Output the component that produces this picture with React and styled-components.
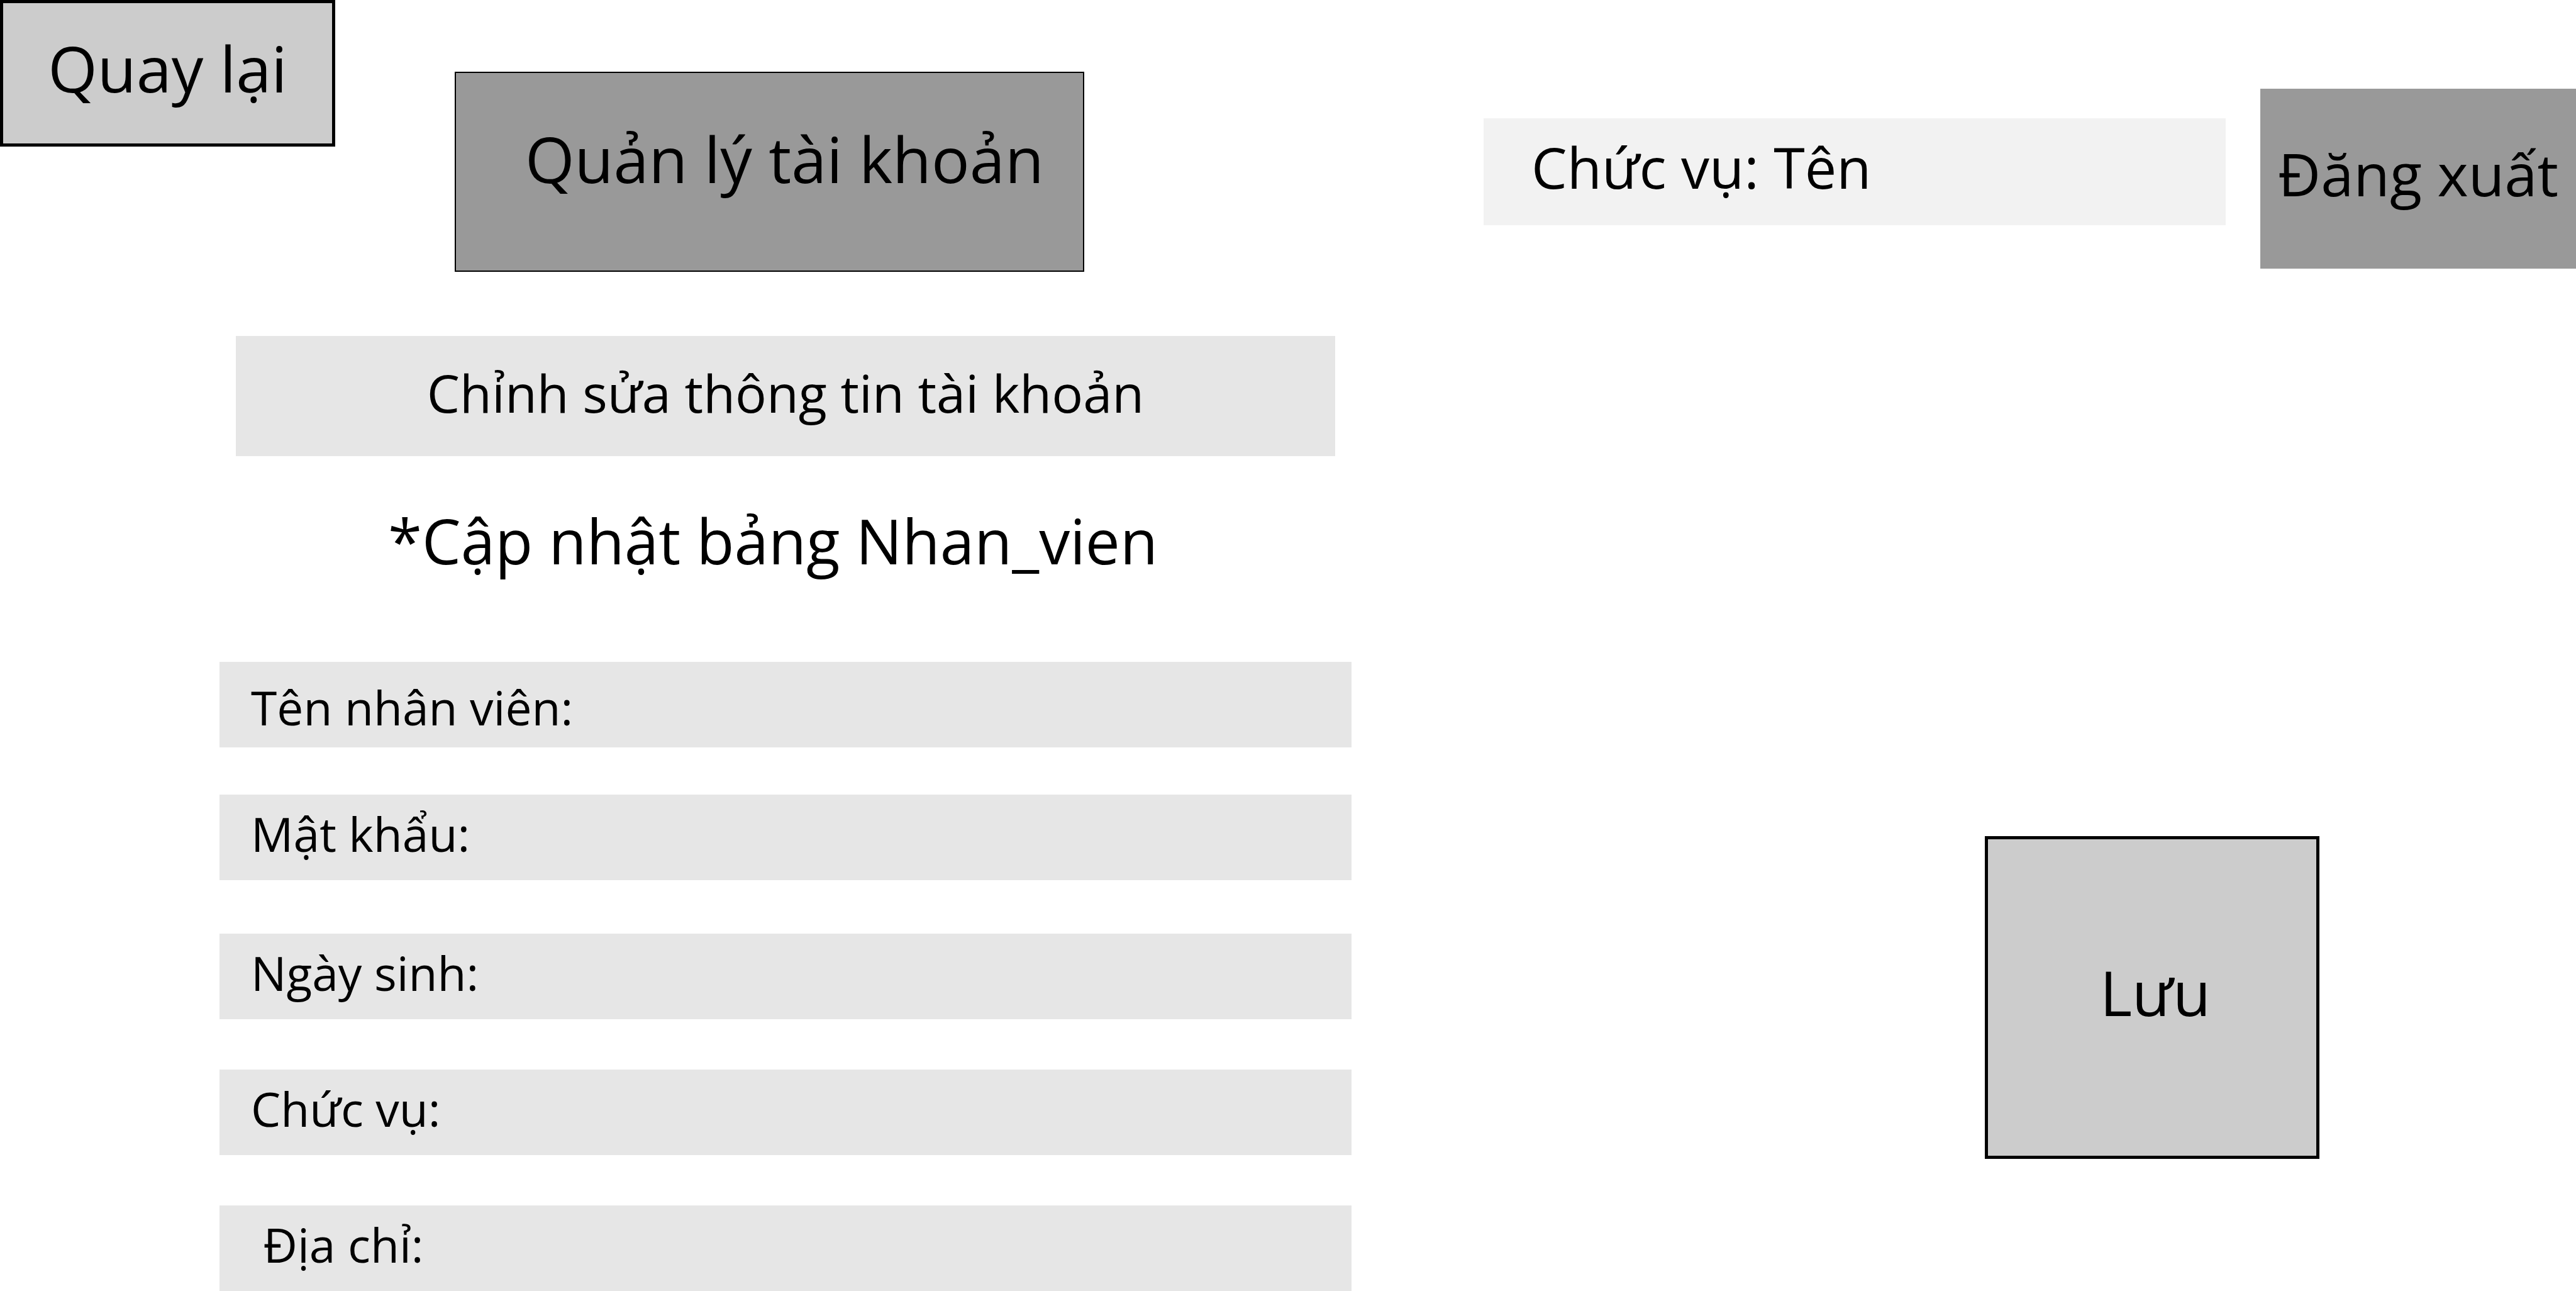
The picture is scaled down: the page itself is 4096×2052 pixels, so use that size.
import React from "react";
import styled, { createGlobalStyle } from "styled-components";

const GlobalStyle = createGlobalStyle`
  *, *::before, *::after {
    box-sizing: border-box;
  }

  body {
    margin: 0;
    background: #fff;
    color: #000;
    font-family: "Open Sans", "Noto Sans", sans-serif;
  }

  button, input {
    margin: 0;
    border: 0;
    border-radius: 0;
    color: inherit;
    font: inherit;
  }
`;

const Page = styled.div`
  display: flex;
  flex-direction: column;
  min-height: 100vh;
`;

const Header = styled.header`
  display: grid;
  grid-template-columns: 533fr 190fr 1001fr 635fr 1180fr 55fr 502fr;
  align-items: start;
  white-space: nowrap;
`;

const BackButton = styled.button`
  grid-column: 1;
  padding: 40px 0 56px;
  border: 5px solid #000;
  background: #ccc;
  font-size: 101px;
  line-height: 127px;
`;

const PageTitle = styled.h1`
  grid-column: 3;
  margin: 114px 0 0;
  padding: 72px 0 114px 110px;
  border: 2px solid #000;
  background: #999;
  font-size: 101px;
  font-weight: 400;
  line-height: 128px;
`;

const UserInfo = styled.div`
  grid-column: 5;
  margin-top: 188px;
  padding: 17px 0 33px 76px;
  background: #f2f2f2;
  font-size: 90px;
  line-height: 120px;
`;

const LogoutButton = styled.button`
  grid-column: 7;
  margin-top: 141px;
  padding: 75px 0 91px;
  background: #999;
  font-size: 94px;
  line-height: 120px;
`;

const Form = styled.form`
  display: grid;
  grid-template-columns: 349fr 1800fr 1007fr 532fr 408fr;
  align-items: start;
  padding-top: 102px;
`;

const Details = styled.section`
  grid-column: 2;
  display: flex;
  flex-direction: column;
`;

const SectionTitle = styled.h2`
  margin: 0 26px;
  padding: 30px 0 41px;
  background: #e6e6e6;
  font-size: 83px;
  font-weight: 400;
  line-height: 120px;
  text-align: center;
`;

const Note = styled.p`
  margin: 67px 0 126px;
  padding-right: 40px;
  font-size: 98px;
  line-height: 134px;
  text-align: center;
`;

const Field = styled.div`
  display: flex;
  margin-top: ${({ $gap }) => $gap}px;
  padding: ${({ $first }) => ($first ? "20px 50px 12px" : "10px 50px 22px")};
  background: #e6e6e6;
  font-size: 75px;
  line-height: 104px;
`;

const FieldLabel = styled.label`
  flex: none;
  white-space: pre;
`;

const FieldInput = styled.input`
  flex: 1;
  min-width: 0;
  height: 104px;
  padding: 0 20px;
  background: transparent;
  outline: none;
`;

const SaveButton = styled.button`
  grid-column: 4;
  margin-top: 795px;
  padding: 182px 0 198px 10px;
  border: 5px solid #000;
  background: #ccc;
  font-size: 98px;
  line-height: 123px;
`;

const fields = [
  { id: "name", label: "Tên nhân viên:", type: "text", gap: 0 },
  { id: "password", label: "Mật khẩu:", type: "password", gap: 75 },
  { id: "birthday", label: "Ngày sinh:", type: "text", gap: 85 },
  { id: "role", label: "Chức vụ:", type: "text", gap: 80 },
  { id: "address", label: " Địa chỉ:", type: "text", gap: 80 },
];

export default function App() {
  return (
    <>
      <GlobalStyle />
      <Page>
        <Header>
          <BackButton type="button">Quay lại</BackButton>
          <PageTitle>Quản lý tài khoản</PageTitle>
          <UserInfo>Chức vụ: Tên</UserInfo>
          <LogoutButton type="button">Đăng xuất</LogoutButton>
        </Header>
        <Form onSubmit={(event) => event.preventDefault()}>
          <Details>
            <SectionTitle>Chỉnh sửa thông tin tài khoản</SectionTitle>
            <Note>*Cập nhật bảng Nhan_vien</Note>
            {fields.map(({ id, label, type, gap }, index) => (
              <Field key={id} $gap={gap} $first={index === 0}>
                <FieldLabel htmlFor={id}>{label}</FieldLabel>
                <FieldInput id={id} name={id} type={type} autoComplete="off" />
              </Field>
            ))}
          </Details>
          <SaveButton type="submit">Lưu</SaveButton>
        </Form>
      </Page>
    </>
  );
}
